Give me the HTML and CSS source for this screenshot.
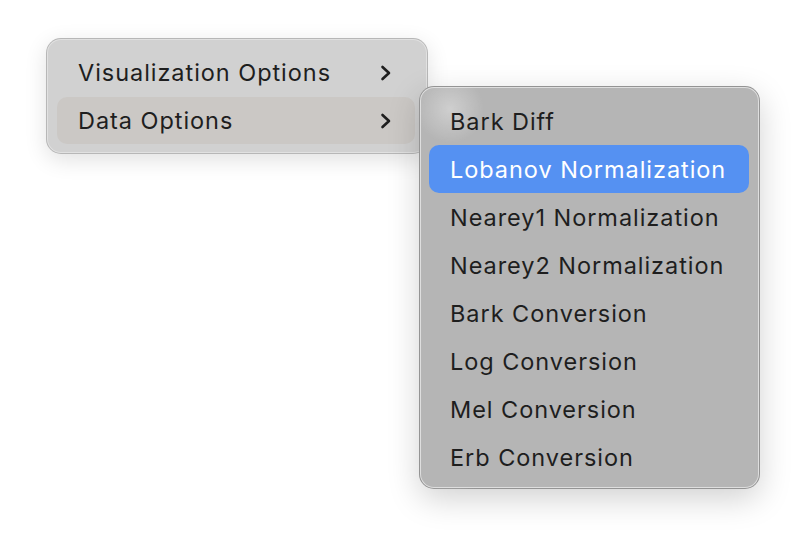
FILE: index.html
```html
<!DOCTYPE html>
<html>
<head>
<meta charset="utf-8">
<link rel="stylesheet" href="styles.css">
</head>
<body>
<div class="stage">
  <div class="menu main-menu">
    <div class="item">
      <span class="label">Visualization Options</span>
      <svg class="chev" width="12" height="16" viewBox="0 0 12 16"><path d="M2.5 2 L9 8 L2.5 14" fill="none" stroke="#1e1e1e" stroke-width="2.6" stroke-linecap="round" stroke-linejoin="round"/></svg>
    </div>
    <div class="item active-parent">
      <span class="label">Data Options</span>
      <svg class="chev" width="12" height="16" viewBox="0 0 12 16"><path d="M2.5 2 L9 8 L2.5 14" fill="none" stroke="#1e1e1e" stroke-width="2.6" stroke-linecap="round" stroke-linejoin="round"/></svg>
    </div>
  </div>
  <div class="menu sub-menu">
    <div class="item"><span class="label">Bark Diff</span></div>
    <div class="item selected"><span class="label">Lobanov Normalization</span></div>
    <div class="item"><span class="label">Nearey1 Normalization</span></div>
    <div class="item"><span class="label">Nearey2 Normalization</span></div>
    <div class="item"><span class="label">Bark Conversion</span></div>
    <div class="item"><span class="label">Log Conversion</span></div>
    <div class="item"><span class="label">Mel Conversion</span></div>
    <div class="item"><span class="label">Erb Conversion</span></div>
  </div>
</div>
</body>
</html>
```

FILE: styles.css
```css
html, body {
  margin: 0;
  padding: 0;
  background: #ffffff;
  width: 806px;
  height: 544px;
  overflow: hidden;
}

body {
  font-family: "Inter", "Liberation Sans", sans-serif;
  font-size: 23.5px;
  letter-spacing: 0.95px;
  color: #1e1e1e;
}

.stage {
  position: relative;
  padding: 38px 0 0 46px;
}

.menu {
  box-sizing: border-box;
  border-radius: 15px;
  display: flex;
  flex-direction: column;
}

.main-menu {
  width: 382px;
  height: 116px;
  padding: 10px 12px 10px 10px;
  background: #d1d1d1;
  border: 1px solid rgba(0, 0, 0, 0.12);
  box-shadow: inset 0 0 0 1px rgba(255, 255, 255, 0.35), 0 6px 22px rgba(0, 0, 0, 0.12);
}

.item {
  height: 48px;
  flex: 0 0 48px;
  display: flex;
  align-items: center;
  justify-content: space-between;
  padding: 0 23px 0 21px;
  border-radius: 10px;
  box-sizing: border-box;
  white-space: nowrap;
}

.main-menu .item {
  height: 47px;
  flex-basis: 47px;
}

.main-menu .item + .item {
  margin-top: 1px;
}

.active-parent {
  background: #cbc8c5;
}

.chev {
  display: block;
  flex: none;
}

.sub-menu {
  position: absolute;
  left: 419px;
  top: 86px;
  width: 341px;
  height: 403px;
  padding: 10px 10px 9px 9px;
  background:
    radial-gradient(circle at 30px 22px, rgba(255, 255, 255, 0.35), rgba(255, 255, 255, 0) 34px),
    #b5b5b5;
  border: 1px solid rgba(0, 0, 0, 0.18);
  box-shadow: inset 0 0 0 1px rgba(255, 255, 255, 0.55), 0 10px 32px rgba(0, 0, 0, 0.18);
}

.selected {
  background: #5591f2;
  color: #ffffff;
}
```
